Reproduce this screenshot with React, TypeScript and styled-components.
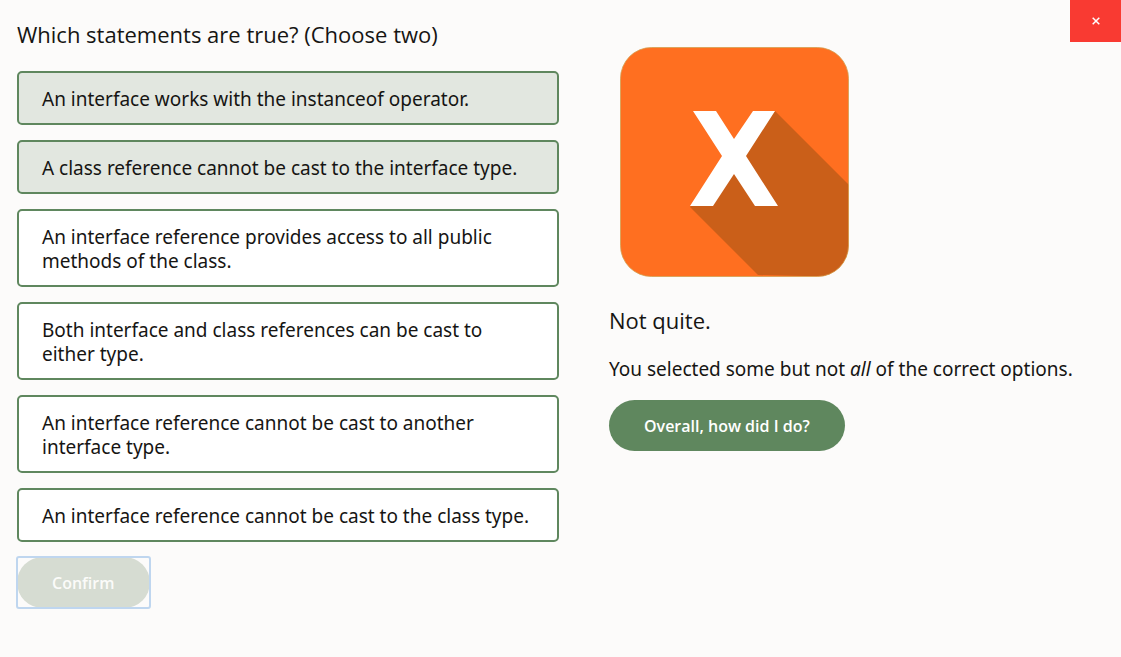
import React, { useState } from "react";
import styled, { createGlobalStyle } from "styled-components";

const GlobalStyle = createGlobalStyle`
  *, *::before, *::after { box-sizing: border-box; }
  body {
    margin: 0;
    background: #fcfbfa;
    color: #161513;
    font-family: "Noto Sans", "Open Sans", sans-serif;
    font-size: 19px;
    line-height: 24px;
  }
  button { cursor: pointer; }
`;

const Page = styled.main`
  display: grid;
  grid-template-columns: minmax(0, 542fr) minmax(0, 495fr);
  column-gap: 50px;
  padding: 19px 17px 48px;
`;

const Heading = styled.h2`
  margin: 0;
  font-family: "Open Sans", "Noto Sans", sans-serif;
  font-size: 22px;
  font-weight: 400;
  line-height: 30px;
`;

const Question = styled.form`
  display: flex;
  flex-direction: column;
  align-items: flex-start;
  gap: 15px;
`;

const Options = styled.fieldset`
  width: 100%;
  min-width: 0;
  margin: 0;
  padding: 0;
  border: 0;
`;

const Legend = styled.legend`
  margin: 0 0 22px;
  padding: 0;
`;

const OptionList = styled.div`
  display: flex;
  flex-direction: column;
  gap: 15px;
`;

const Option = styled.label<{ $selected: boolean }>`
  position: relative;
  display: block;
  padding: 14px 23px 12px;
  border: 2px solid #5f875e;
  border-radius: 5px;
  background: ${(p) => (p.$selected ? "#e2e7e0" : "#ffffff")};
  cursor: pointer;
`;

const OptionInput = styled.input`
  position: absolute;
  inset: 0;
  width: 100%;
  height: 100%;
  margin: 0;
  opacity: 0;
  cursor: pointer;
`;

const PillButton = styled.button<{ $muted?: boolean }>`
  display: block;
  padding: 14px 35px 13px;
  border: 0;
  border-radius: 26px;
  background: ${(p) => (p.$muted ? "#d6dcd2" : "#5f875e")};
  color: ${(p) => (p.$muted ? "#fbfbf9" : "#ffffff")};
  font-family: "Open Sans", "Noto Sans", sans-serif;
  font-size: 16px;
  font-weight: 600;
  line-height: 24px;
`;

const FocusFrame = styled.div`
  border-radius: 2px;
  outline: 2px solid #bfd6ef;
  outline-offset: -1px;
`;

const Feedback = styled.section`
  display: flex;
  flex-direction: column;
  align-items: flex-start;
  padding-top: 28px;
`;

const ResultIcon = styled.svg`
  display: block;
  width: 229px;
  height: 230px;
  margin: 0 11px 28px;
`;

const Message = styled.p`
  margin: 22px 0 19px;
`;

const CloseButton = styled.button`
  position: fixed;
  top: 0;
  right: 0;
  display: flex;
  align-items: center;
  justify-content: center;
  width: 51px;
  height: 42px;
  padding: 0;
  border: 0;
  background: #f93a32;
  color: #ffffff;
`;

const statements = [
  "An interface works with the instanceof operator.",
  "A class reference cannot be cast to the interface type.",
  "An interface reference provides access to all public methods of the class.",
  "Both interface and class references can be cast to either type.",
  "An interface reference cannot be cast to another interface type.",
  "An interface reference cannot be cast to the class type.",
];

export default function App() {
  const [selected, setSelected] = useState<number[]>([0, 1]);
  const toggle = (index: number) =>
    setSelected((current) =>
      current.includes(index)
        ? current.filter((item) => item !== index)
        : [...current, index],
    );

  return (
    <>
      <GlobalStyle />
      <Page>
        <Question onSubmit={(event) => event.preventDefault()}>
          <Options>
            <Legend>
              <Heading>Which statements are true? (Choose two)</Heading>
            </Legend>
            <OptionList>
              {statements.map((text, index) => (
                <Option key={text} $selected={selected.includes(index)}>
                  <OptionInput
                    type="checkbox"
                    checked={selected.includes(index)}
                    onChange={() => toggle(index)}
                  />
                  {text}
                </Option>
              ))}
            </OptionList>
          </Options>
          <FocusFrame>
            <PillButton type="submit" $muted>
              Confirm
            </PillButton>
          </FocusFrame>
        </Question>

        <Feedback>
          <ResultIcon viewBox="0 0 229 230" role="img" aria-label="Incorrect">
            <defs>
              <clipPath id="tile">
                <rect x="0.5" y="0.5" width="228" height="229" rx="31" />
              </clipPath>
            </defs>
            <g clipPath="url(#tile)">
              <rect width="229" height="230" fill="#ff6f20" />
              <path d="M155 64L229 138V230L138 228L70 160L114 110Z" fill="#ca5f19" />
            </g>
            <rect x="0.5" y="0.5" width="228" height="229" rx="31" fill="none" stroke="#d3a050" strokeWidth="0.8" />
            <path
              d="M73 64H96L114 92L133 64H155L126 109L158 159H135L114 127L93 159H70L102 109Z"
              fill="#ffffff"
            />
          </ResultIcon>
          <Heading>Not quite.</Heading>
          <Message>
            You selected some but not <em>all</em> of the correct options.
          </Message>
          <PillButton type="button">Overall, how did I do?</PillButton>
        </Feedback>
      </Page>
      <CloseButton type="button" aria-label="Close">
        <svg width="8" height="8" viewBox="0 0 8 8" aria-hidden="true">
          <path d="M0.7 0.7L7.3 7.3M7.3 0.7L0.7 7.3" stroke="currentColor" strokeWidth="1.5" />
        </svg>
      </CloseButton>
    </>
  );
}
